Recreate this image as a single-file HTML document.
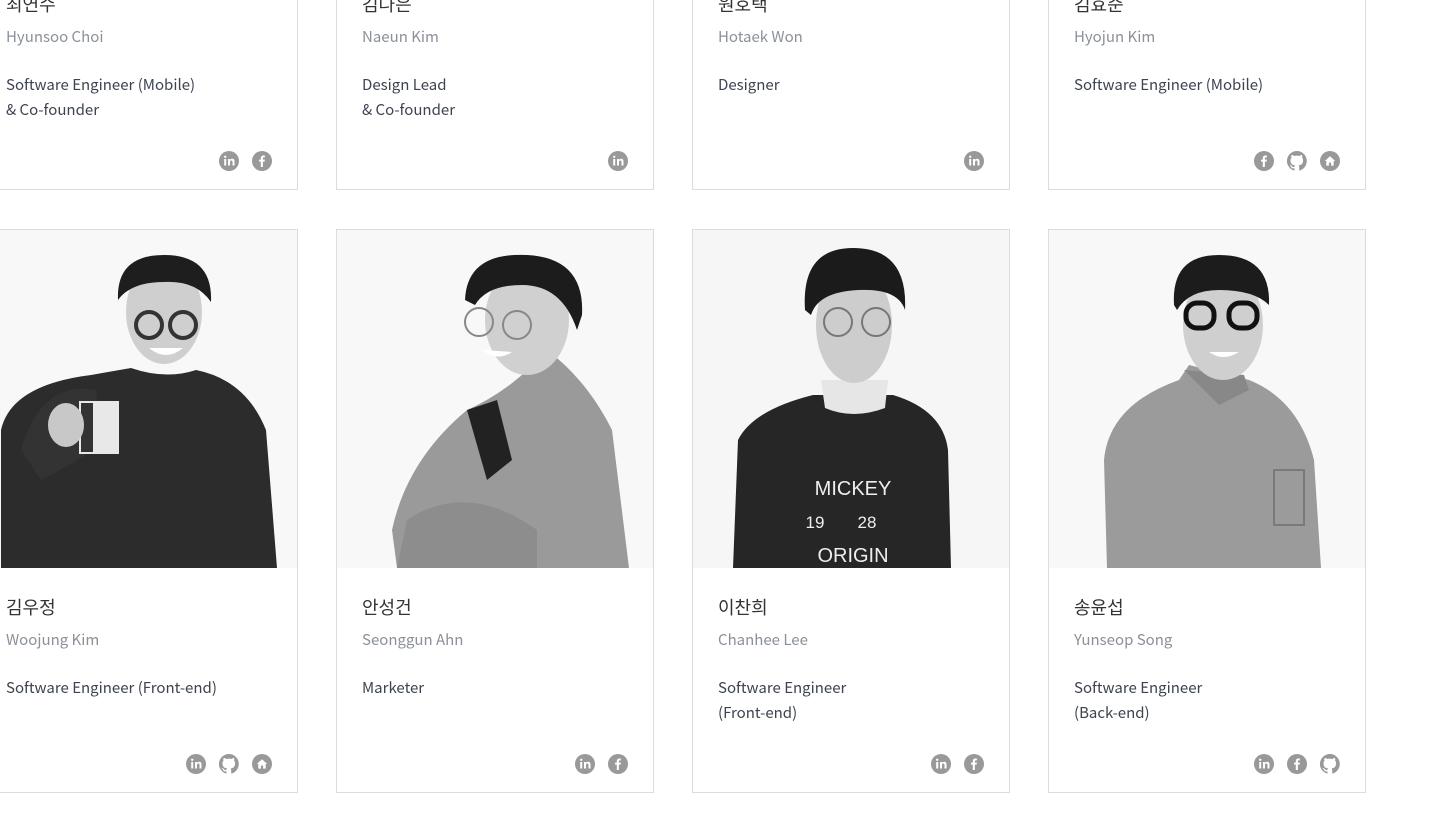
<!DOCTYPE html>
<html><head><meta charset="utf-8">
<style>
html,body{margin:0;padding:0;background:#fff;width:1449px;height:820px;overflow:hidden;position:relative;font-family:"Noto Sans CJK KR","Liberation Sans",sans-serif;}
.card{position:absolute;width:316px;height:562px;border:1px solid #dcdcdc;background:#fff;}
.photo{position:absolute;left:0;top:0;width:316px;height:338px;background:#f8f8f8;overflow:hidden;}
.photo svg{display:block}
.t{position:absolute;left:25px;white-space:nowrap;line-height:25px;}
.nm{top:365px;font-size:18px;color:#333;}
.en{top:397px;font-size:15px;color:#8b9099;}
.r1{top:445px;font-size:15px;color:#3d4350;}
.r2{top:470px;font-size:15px;color:#3d4350;}
.ic{position:absolute;top:524px;height:22px;display:flex;gap:13px;}
.ic svg{width:20px;height:20px;display:block}
</style></head><body>
<svg width="0" height="0" style="position:absolute">
<defs>
<symbol id="li" viewBox="0 0 20 20"><circle cx="10" cy="10" r="10" fill="#999"/><rect x="5.2" y="8" width="2" height="6.5" fill="#fff"/><circle cx="6.2" cy="5.8" r="1.2" fill="#fff"/><path d="M9 8h1.9v1c.5-.8 1.3-1.2 2.3-1.2 1.6 0 2.3 1 2.3 2.8v3.9h-2v-3.5c0-.9-.3-1.5-1.1-1.5s-1.4.6-1.4 1.5v3.5H9z" fill="#fff"/></symbol>
<symbol id="fb" viewBox="0 0 20 20"><circle cx="10" cy="10" r="10" fill="#999"/><path d="M10.9 16V10.6h1.7l.3-2h-2V7.4c0-.6.2-1 1-1h1V4.6c-.2 0-.8-.1-1.5-.1-1.6 0-2.6.9-2.6 2.6v1.5H7.1v2h1.7V16z" fill="#fff"/></symbol>
<symbol id="gh" viewBox="0 0 20 20"><path d="M10 0a10 10 0 0 0-3.2 19.5c.5.1.7-.2.7-.5v-1.7c-2.8.6-3.4-1.3-3.4-1.3-.5-1.2-1.1-1.5-1.1-1.5-.9-.6.1-.6.1-.6 1 .1 1.5 1 1.5 1 .9 1.5 2.3 1.1 2.9.8.1-.6.3-1.1.6-1.3-2.2-.3-4.6-1.1-4.6-5 0-1.1.4-2 1-2.700-.1-.3-.4-1.3.1-2.7 0 0 .8-.3 2.7 1a9.4 9.4 0 0 1 5 0c1.9-1.3 2.700-1 2.700-1 .5 1.4.2 2.4.1 2.7.6.7 1 1.6 1 2.7 0 3.9-2.3 4.7-4.6 5 .4.3.7.9.7 1.9V19c0 .3.2.6.7.5A10 10 0 0 0 10 0z" fill="#999"/></symbol>
<symbol id="hm" viewBox="0 0 20 20"><circle cx="10" cy="10" r="10" fill="#999"/><path d="M10 5.2 4.8 10h1.5v4.6h2.6v-3h2.2v3h2.6V10h1.5z" fill="#fff"/></symbol>
</defs></svg>

<!-- Row 1 -->
<div class="card" style="left:-20px;top:-374px">
 <div class="t nm">최연수</div><div class="t en">Hyunsoo Choi</div>
 <div class="t r1">Software Engineer (Mobile)</div><div class="t r2">&amp; Co-founder</div>
 <div class="ic" style="left:238px"><svg><use href="#li"/></svg><svg><use href="#fb"/></svg></div>
</div>
<div class="card" style="left:336px;top:-374px">
 <div class="t nm">김나은</div><div class="t en">Naeun Kim</div>
 <div class="t r1">Design Lead</div><div class="t r2">&amp; Co-founder</div>
 <div class="ic" style="left:271px"><svg><use href="#li"/></svg></div>
</div>
<div class="card" style="left:692px;top:-374px">
 <div class="t nm">원호택</div><div class="t en">Hotaek Won</div>
 <div class="t r1">Designer</div>
 <div class="ic" style="left:271px"><svg><use href="#li"/></svg></div>
</div>
<div class="card" style="left:1048px;top:-374px">
 <div class="t nm">김효준</div><div class="t en">Hyojun Kim</div>
 <div class="t r1">Software Engineer (Mobile)</div>
 <div class="ic" style="left:205px"><svg><use href="#fb"/></svg><svg><use href="#gh"/></svg><svg><use href="#hm"/></svg></div>
</div>

<!-- Row 2 -->
<div class="card" style="left:-20px;top:229px">
 <div class="photo"><svg width="316" height="338" viewBox="0 0 316 338">
  <rect width="316" height="338" fill="#f8f8f8"/>
  <path d="M20 338 L20 200 Q30 155 110 145 L150 138 Q185 150 215 140 Q265 150 285 200 L296 338Z" fill="#2c2c2c"/>
  <path d="M40 220 Q60 150 115 160 L120 215 Q90 235 60 250Z" fill="#333"/>
  <ellipse cx="183" cy="82" rx="38" ry="52" fill="#cfcfcf"/>
  <path d="M137 70 Q135 25 183 25 Q232 25 230 72 Q215 50 183 52 Q150 52 137 70Z" fill="#1e1e1e"/>
  <circle cx="168" cy="95" r="13" fill="none" stroke="#333" stroke-width="4"/><circle cx="202" cy="95" r="13" fill="none" stroke="#333" stroke-width="4"/>
  <path d="M168 118 Q185 132 202 118Z" fill="#fff"/>
  <rect x="98" y="171" width="40" height="53" fill="#e8e8e8"/><rect x="100" y="173" width="12" height="49" fill="#333"/>
  <ellipse cx="85" cy="195" rx="18" ry="22" fill="#c8c8c8"/>
 </svg></div>
 <div class="t nm">김우정</div><div class="t en">Woojung Kim</div>
 <div class="t r1">Software Engineer (Front-end)</div>
 <div class="ic" style="left:205px"><svg><use href="#li"/></svg><svg><use href="#gh"/></svg><svg><use href="#hm"/></svg></div>
</div>
<div class="card" style="left:336px;top:229px">
 <div class="photo"><svg width="316" height="338" viewBox="0 0 316 338">
  <rect width="316" height="338" fill="#f8f8f8"/>
  <path d="M60 338 L55 300 Q70 230 130 180 Q175 160 210 120 Q250 150 275 200 L292 338Z" fill="#9a9a9a"/>
  <path d="M130 180 L160 170 L175 230 L150 250Z" fill="#222"/>
  <path d="M70 290 Q130 250 200 300 L200 338 L60 338Z" fill="#8d8d8d"/>
  <ellipse cx="190" cy="90" rx="42" ry="55" fill="#d0d0d0"/>
  <path d="M128 70 Q130 22 190 25 Q248 28 245 85 L240 100 Q225 55 185 55 Q150 55 138 75Z" fill="#1c1c1c"/>
  <circle cx="142" cy="92" r="14" fill="none" stroke="#888" stroke-width="2"/><circle cx="180" cy="95" r="14" fill="none" stroke="#888" stroke-width="2"/>
  <path d="M145 120 Q160 132 175 122Z" fill="#fff"/>
 </svg></div>
 <div class="t nm">안성건</div><div class="t en">Seonggun Ahn</div>
 <div class="t r1">Marketer</div>
 <div class="ic" style="left:238px"><svg><use href="#li"/></svg><svg><use href="#fb"/></svg></div>
</div>
<div class="card" style="left:692px;top:229px">
 <div class="photo"><svg width="316" height="338" viewBox="0 0 316 338">
  <rect width="316" height="338" fill="#f6f6f6"/>
  <path d="M40 338 L45 210 Q60 180 120 165 L200 165 Q250 180 255 220 L258 338Z" fill="#262626"/>
  <path d="M128 150 L195 150 L192 178 Q160 190 132 178Z" fill="#e6e6e6"/>
  <ellipse cx="161" cy="95" rx="38" ry="58" fill="#cdcdcd"/>
  <path d="M112 80 Q108 18 160 18 Q215 18 212 80 Q205 58 165 60 Q125 62 118 85Z" fill="#1b1b1b"/>
  <circle cx="145" cy="92" r="14" fill="none" stroke="#777" stroke-width="2"/><circle cx="183" cy="92" r="14" fill="none" stroke="#777" stroke-width="2"/>
  <text x="160" y="265" fill="#eee" font-size="20" text-anchor="middle" font-family="Liberation Sans">MICKEY</text>
  <text x="148" y="298" fill="#eee" font-size="17" text-anchor="middle" font-family="Liberation Sans">19 &#160;&#160;&#160;&#160;&#160; 28</text>
  <text x="160" y="332" fill="#eee" font-size="20" text-anchor="middle" font-family="Liberation Sans">ORIGIN</text>
 </svg></div>
 <div class="t nm">이찬희</div><div class="t en">Chanhee Lee</div>
 <div class="t r1">Software Engineer</div><div class="t r2">(Front-end)</div>
 <div class="ic" style="left:238px"><svg><use href="#li"/></svg><svg><use href="#fb"/></svg></div>
</div>
<div class="card" style="left:1048px;top:229px">
 <div class="photo"><svg width="316" height="338" viewBox="0 0 316 338">
  <rect width="316" height="338" fill="#f8f8f8"/>
  <path d="M58 338 L55 230 Q60 175 130 150 L140 135 L200 150 Q250 170 265 230 L272 338Z" fill="#9b9b9b"/>
  <path d="M135 140 L170 175 L200 160 L195 145 Z" fill="#888"/>
  <rect x="225" y="240" width="30" height="55" fill="none" stroke="#7a7a7a" stroke-width="2"/>
  <ellipse cx="174" cy="95" rx="40" ry="55" fill="#cfcfcf"/>
  <path d="M125 75 Q122 25 170 25 Q222 25 220 75 Q205 60 170 60 Q140 60 128 80Z" fill="#1c1c1c"/>
  <rect x="137" y="73" width="28" height="25" rx="11" fill="none" stroke="#111" stroke-width="5"/><rect x="180" y="73" width="28" height="25" rx="11" fill="none" stroke="#111" stroke-width="5"/>
  <path d="M160 122 Q174 132 190 122Z" fill="#fff"/>
 </svg></div>
 <div class="t nm">송윤섭</div><div class="t en">Yunseop Song</div>
 <div class="t r1">Software Engineer</div><div class="t r2">(Back-end)</div>
 <div class="ic" style="left:205px"><svg><use href="#li"/></svg><svg><use href="#fb"/></svg><svg><use href="#gh"/></svg></div>
</div>
</body></html>
